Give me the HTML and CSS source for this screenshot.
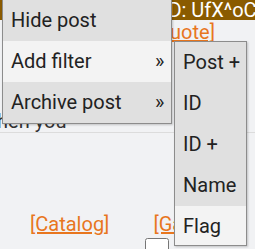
FILE: index.html
```html
<!DOCTYPE html>
<html lang="en">
<head>
    <meta charset="UTF-8">
    <title>Post menu</title>
    <link rel="stylesheet" href="styles.css">
</head>
<body>
    <div class="page">
        <div class="post-head">
            <span class="post-id">ID: UfX^oCx</span>
        </div>
        <div class="post-links">
            <a href="#">[Quote]</a>
        </div>
        <div class="post-body">when you</div>
        <hr class="sep">
        <div class="nav">
            <a href="#">[Catalog]</a>
            <a href="#">[Gallery]</a>
        </div>
        <div class="boxrow"><input type="checkbox" class="box"></div>
    </div>

    <!-- context menu -->
    <ul class="menu main">
        <li>Hide post</li>
        <li class="hover">Add filter <span class="more">»</span></li>
        <li>Archive post <span class="more">»</span></li>
    </ul>
    <ul class="menu sub">
        <li>Post +</li>
        <li>ID</li>
        <li>ID +</li>
        <li>Name</li>
        <li class="hover">Flag</li>
    </ul>
</body>
</html>
```

FILE: styles.css
```css
html, body{
    margin: 0;
    height: 100%;
    overflow: hidden;
    background-color: #f1f2f4;
    font-family: Roboto, "Liberation Sans", sans-serif;
}
a{
    color: #e8761e;
}
.post-head{
    height: 20px;
    background-color: #8a5b00;
    color: #fff;
    font-size: 20px;
    line-height: 20px;
    padding-left: 163px;
    white-space: nowrap;
}
.post-links{
    padding-left: 151px;
    font-size: 20px;
    line-height: 24px;
}
.post-body{
    margin-top: 66px;
    margin-left: -18px;
    font-size: 20px;
    line-height: 22px;
    color: #333;
    white-space: nowrap;
}
.sep{
    margin: 0;
    border: 0;
    border-top: 1px solid #dcdcdc;
}
.nav{
    margin-top: 80px;
    display: flex;
    gap: 44px;
    padding-left: 30px;
    font-size: 20px;
    line-height: 22px;
    white-space: nowrap;
}
.boxrow{
    padding-left: 145px;
    margin-top: 3px;
}
.box{
    margin: 0;
    width: 24px;
    height: 24px;
}

/* menus */
.menu{
    position: absolute;
    margin: 0;
    padding: 0;
    list-style: none;
    background-color: #e0e0e0;
    border: 1px solid #8c8c8c;
    box-shadow: 1px 1px 2px rgba(0,0,0,0.2);
    font-size: 20px;
    color: #222;
}
.menu li{
    height: 41px;
    line-height: 41px;
    padding-left: 8px;
    display: flex;
}
.menu li.hover{
    background-color: #f3f3f3;
}
.main{
    left: 2px;
    top: -1px;
    width: 168px;
}
.more{
    margin-left: auto;
    width: 16px;
}
.sub{
    left: 174px;
    top: 41px;
    width: 71px;
}
.sub li:last-child{
    height: 39px;
}
```
